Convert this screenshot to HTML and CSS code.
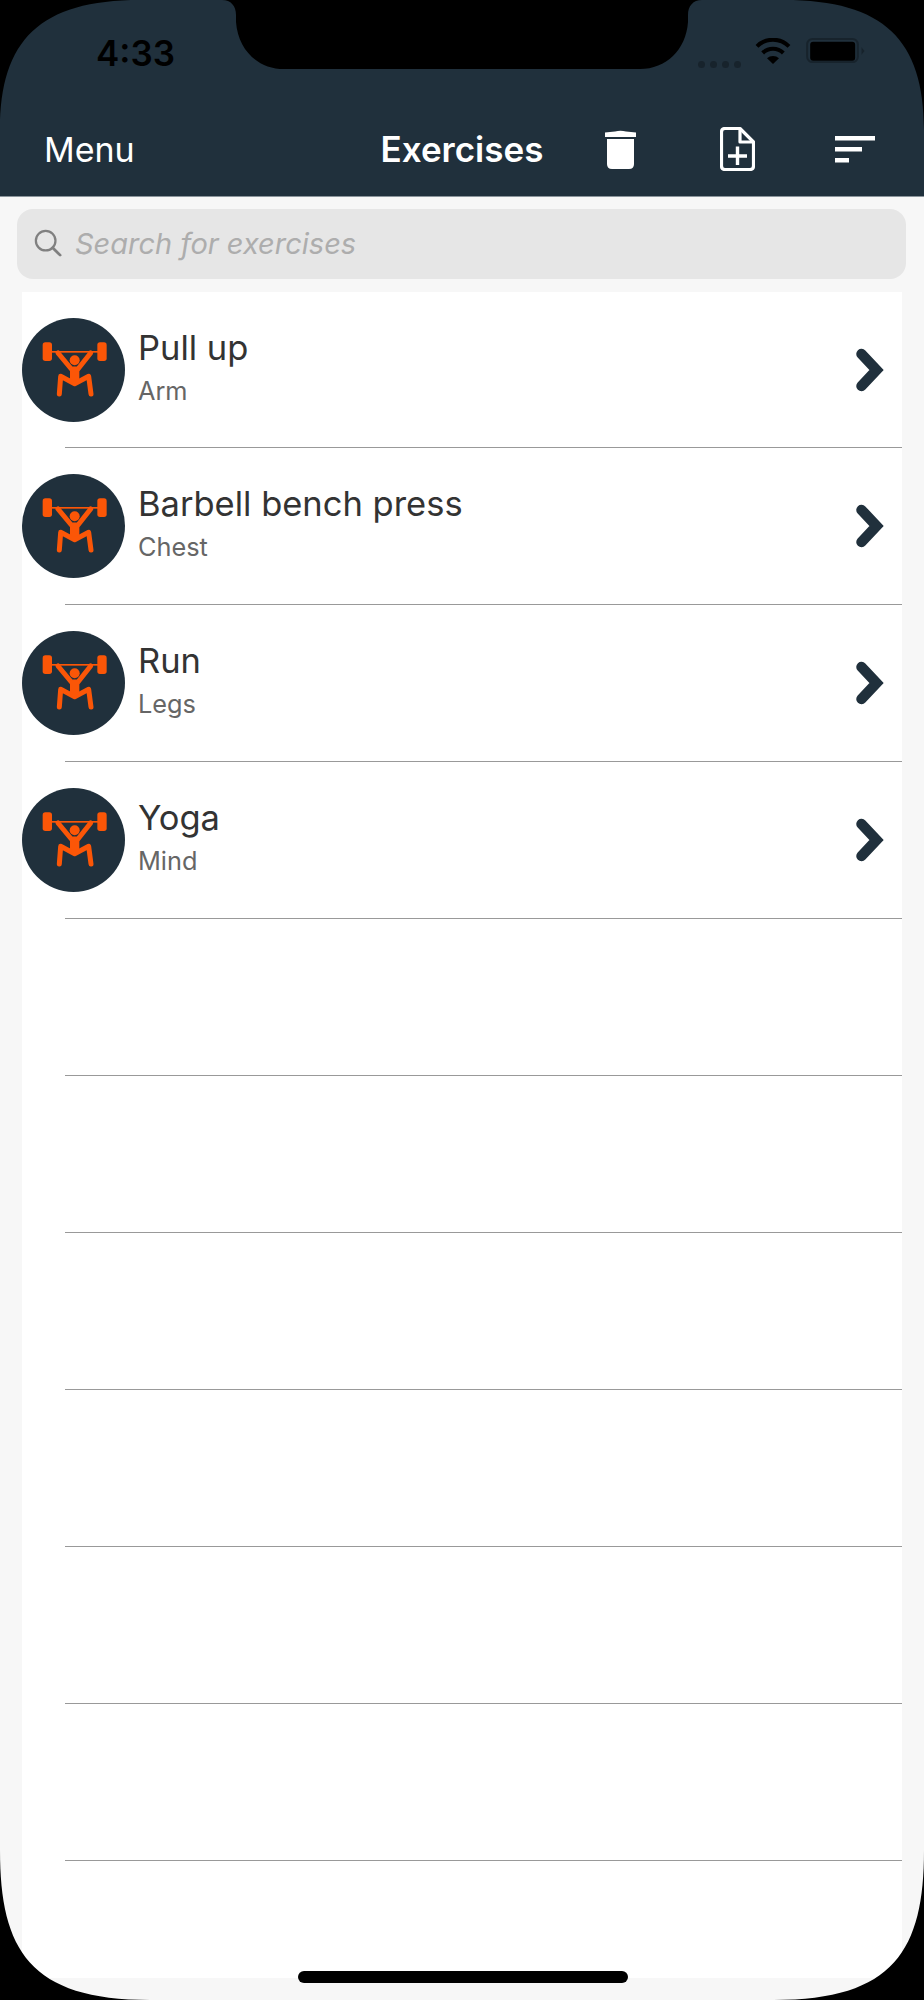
FILE: index.html
```html
<!DOCTYPE html>
<html lang="en">
<head>
<meta charset="utf-8">
<title>Exercises</title>
<link rel="stylesheet" href="styles.css">
</head>
<body>
<svg width="0" height="0" class="defs">
  <defs>
    <symbol id="lifter" viewBox="0 0 228 210">
      <rect x="20" y="22" width="28" height="56" rx="8" fill="#fb5607"/>
      <rect x="184" y="22" width="28" height="56" rx="8" fill="#fb5607"/>
      <rect x="46" y="48" width="140" height="5" fill="#fb5607"/>
      <circle cx="116" cy="76" r="15" fill="#fb5607"/>
      <path d="M66 54L106 102H126L164 54" fill="none" stroke="#fb5607" stroke-width="15" stroke-linecap="round" stroke-linejoin="round"/>
      <path d="M102 98H130V132L116 150L102 132Z" fill="#fb5607"/>
      <path d="M70 177L74 124L116 146L158 124L165 177" fill="none" stroke="#fb5607" stroke-width="15" stroke-linecap="round" stroke-linejoin="round"/>
    </symbol>
    <symbol id="chevron" viewBox="0 0 30 44">
      <path d="M7.500 6L22.500 22L7.500 38" fill="none" stroke="#20303c" stroke-width="10.500" stroke-linecap="round" stroke-linejoin="miter"/>
    </symbol>
  </defs>
</svg>
<main class="screen">
  <header class="header">
    <div class="status">
      <span class="time">4:33</span>
      <div class="status-icons">
        <div class="signal"><i></i><i></i><i></i><i></i></div>
        <svg class="wifi" viewBox="197 27 108 78" width="36" height="26">
          <path d="M203 52A68 68 0 0 1 299 52" fill="none" stroke="#000" stroke-width="12"/>
          <path d="M220 72A44 44 0 0 1 282 72" fill="none" stroke="#000" stroke-width="12"/>
          <path d="M251 105L233 88A26 26 0 0 1 269 88Z" fill="#000"/>
        </svg>
        <svg class="battery" viewBox="350 27 176 75" width="59" height="25">
          <rect x="353" y="30" width="152" height="69" rx="16" fill="none" stroke="#17232c" stroke-width="6"/>
          <rect x="362" y="38" width="135" height="57" rx="9" fill="#000"/>
          <path d="M516 55L525 66L516 77Z" fill="#17232c"/>
        </svg>
      </div>
    </div>
    <nav class="nav">
      <span class="menu">Menu</span>
      <h1 class="title">Exercises</h1>
      <div class="actions">
        <span class="action">
          <svg viewBox="0 0 31 39" width="31" height="39">
            <path d="M10 1.500Q15.500 0 21 1.500L31 2.500V7H0V2.500Z" fill="#fff"/>
            <path d="M2 9H29V34Q29 39 24 39H7Q2 39 2 34Z" fill="#fff"/>
          </svg>
        </span>
        <span class="action">
          <svg viewBox="0 0 35 44" width="35" height="44">
            <path d="M20 1.500H5Q1.500 1.500 1.500 5V39Q1.500 42.500 5 42.500H30Q33.500 42.500 33.500 39V15Z" fill="none" stroke="#fff" stroke-width="3.200" stroke-linejoin="round"/>
            <path d="M20 1.500V15H33.500" fill="none" stroke="#fff" stroke-width="3.200" stroke-linejoin="round"/>
            <path d="M17.500 19.500V38M8 29H27" fill="none" stroke="#fff" stroke-width="3.400"/>
          </svg>
        </span>
        <span class="action">
          <svg viewBox="0 0 40 27" width="40" height="27">
            <path d="M0 2.200H40M0 13.300H27M0 24.200H14" fill="none" stroke="#fff" stroke-width="4.400"/>
          </svg>
        </span>
      </div>
    </nav>
  </header>
  <div class="search">
    <svg class="search-icon" viewBox="0 0 30 30" width="28" height="28">
      <circle cx="12.500" cy="12.500" r="10.500" fill="none" stroke="#808080" stroke-width="2.400"/>
      <path d="M20 20L28 28" fill="none" stroke="#808080" stroke-width="3" stroke-linecap="round"/>
    </svg>
    <span class="placeholder">Search for exercises</span>
  </div>
  <section class="list">
    <article class="row">
      <div class="avatar"><svg width="76" height="70"><use href="#lifter"/></svg></div>
      <div class="text"><div class="name">Pull up</div><div class="group">Arm</div></div>
      <svg class="chevron" width="30" height="44"><use href="#chevron"/></svg>
    </article>
    <div class="sep"></div>
    <article class="row">
      <div class="avatar"><svg width="76" height="70"><use href="#lifter"/></svg></div>
      <div class="text"><div class="name">Barbell bench press</div><div class="group">Chest</div></div>
      <svg class="chevron" width="30" height="44"><use href="#chevron"/></svg>
    </article>
    <div class="sep"></div>
    <article class="row">
      <div class="avatar"><svg width="76" height="70"><use href="#lifter"/></svg></div>
      <div class="text"><div class="name">Run</div><div class="group">Legs</div></div>
      <svg class="chevron" width="30" height="44"><use href="#chevron"/></svg>
    </article>
    <div class="sep"></div>
    <article class="row">
      <div class="avatar"><svg width="76" height="70"><use href="#lifter"/></svg></div>
      <div class="text"><div class="name">Yoga</div><div class="group">Mind</div></div>
      <svg class="chevron" width="30" height="44"><use href="#chevron"/></svg>
    </article>
    <div class="sep"></div>
    <div class="row"></div><div class="sep"></div>
    <div class="row"></div><div class="sep"></div>
    <div class="row"></div><div class="sep"></div>
    <div class="row"></div><div class="sep"></div>
    <div class="row"></div><div class="sep"></div>
    <div class="row"></div><div class="sep"></div>
  </section>
  <svg class="mask" viewBox="0 0 924 2000" width="924" height="2000">
    <path fill="#000" fill-rule="evenodd" d="M0 0H924V2000H0Z M0 130C0 40 40 0 140 0H222C231 0 236 6 236 15V22C238 50 258 69 284 69H640C666 69 686 50 688 22V15C688 6 693 0 702 0H784C884 0 924 40 924 130V1850C924 1950 894 2000 774 2000H150C30 2000 0 1950 0 1850Z"/>
  </svg>
  <div class="home"></div>
</main>
</body>
</html>
```
FILE: styles.css
```css
* { box-sizing: border-box; }
html, body { margin: 0; padding: 0; }
body { font-family: Inter, "Liberation Sans", sans-serif; background: #000; }
.defs { position: absolute; }
.screen {
  position: relative;
  width: 924px;
  height: 2000px;
  background: #f7f7f7;
  display: flex;
  flex-direction: column;
  overflow: hidden;
}
.header {
  height: 197px;
  background: #20303c;
  border-bottom: 1px solid #8a949b;
  display: flex;
  flex-direction: column;
  flex: none;
}
.status {
  height: 44px;
  margin-top: 31px;
  padding: 0 59px 0 96px;
  display: flex;
  justify-content: space-between;
  align-items: center;
}
.time { font-size: 35px; font-weight: 600; color: #000; }
.status-icons { display: flex; align-items: flex-start; height: 44px; padding-top: 7px; }
.signal { display: flex; gap: 5px; margin-top: 23px; margin-right: 14px; }
.signal i { width: 7px; height: 7px; border-radius: 50%; background: #17232c; }
.wifi { margin-right: 15px; display: block; }
.battery { display: block; }
.nav {
  flex: 1;
  display: grid;
  grid-template-columns: 1fr auto 1fr;
  align-items: center;
  padding: 27px 11px 0 11px;
}
.menu { font-size: 34px; color: #fff; margin-left: 33px; }
.title { margin: 0; font-size: 35px; font-weight: 600; color: #fff; }
.actions { display: flex; justify-content: flex-end; }
.action { width: 117px; display: flex; justify-content: center; align-items: center; }
.action svg { display: block; }
.search {
  flex: none;
  height: 70px;
  margin: 12px 18px 13px 17px;
  background: #e6e6e6;
  border-radius: 16px;
  display: flex;
  align-items: center;
  padding: 0 0 2px 17px;
  gap: 13px;
}
.placeholder { font-size: 29px; font-style: italic; color: #adadad; }
.list {
  flex: none;
  height: 1686px;
  margin: 0 22px;
  background: #fff;
  overflow: hidden;
}
.row {
  height: 156px;
  display: flex;
  align-items: center;
  padding-right: 18px;
}
.row:first-child { height: 155px; }
.sep { height: 1px; margin-left: 43px; background: #999; }
.avatar {
  width: 103px;
  height: 104px;
  border-radius: 50%;
  background: #20303c;
  display: flex;
  align-items: center;
  justify-content: center;
  flex: none;
}
.avatar svg { display: block; }
.text { flex: 1; margin-left: 13px; padding-bottom: 6px; }
.name { font-size: 34.5px; line-height: 44px; color: #333; }
.group { font-size: 25.3px; line-height: 34px; margin-top: 4px; color: #666; }
.chevron { display: block; flex: none; }
.mask { position: absolute; inset: 0; pointer-events: none; }
.home {
  position: absolute;
  left: 298px;
  top: 1971px;
  width: 330px;
  height: 12px;
  border-radius: 6px;
  background: #000;
}
```
